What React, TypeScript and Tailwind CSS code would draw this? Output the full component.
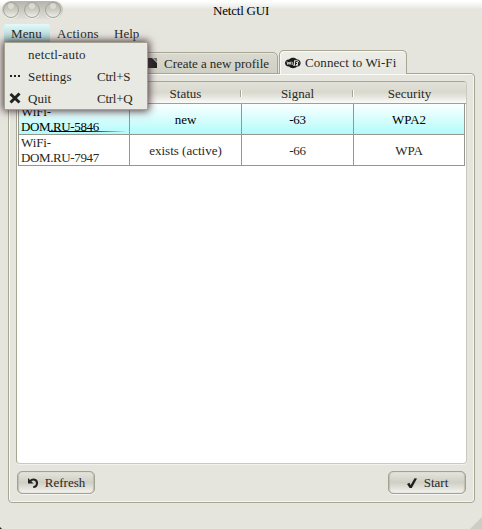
import React from 'react';

const networks = [
  { name: 'DOM.RU-5846', status: 'new', signal: '-63', security: 'WPA2', selected: true },
  { name: 'DOM.RU-7947', status: 'exists (active)', signal: '-66', security: 'WPA', selected: false },
];

function WindowButton() {
  return (
    <span className="h-4 w-4 rounded-full border border-[#a3a396] bg-gradient-to-b from-[#b9b9ae] via-[#cbcbc1] to-[#efefea] shadow-[0_1px_0_#f0f0ec]">
      <span className="mx-auto block h-1.5 w-1.5 rounded-full bg-[#e6e6df]/70" />
    </span>
  );
}

function TitleBar() {
  return (
    <header className="flex h-6 shrink-0 items-start bg-gradient-to-b from-white from-5% to-[#e5e5de] to-40%">
      <div className="mt-px ml-0.5 flex h-[18px] w-[61px] items-center gap-[5px] rounded-full bg-gradient-to-b from-[#b4b4ae] to-[#dfdfd8] pl-[1px]">
        <WindowButton />
        <WindowButton />
        <WindowButton />
      </div>
      <h1 className="ml-[150px] pt-[3px] text-[13px] leading-4 tracking-[-0.2px] text-black">Netctl GUI</h1>
    </header>
  );
}

function MenuBar() {
  return (
    <nav className="flex h-[19px] shrink-0 pl-1">
      <span className="w-[46px] rounded-t-[3px] bg-gradient-to-b from-[#e3fafa] to-[#9fcaca] pl-[7px] leading-5 tracking-[0.1px]">Menu</span>
      <span className="w-[57px] pl-[7px] leading-5 tracking-[0.2px]">Actions</span>
      <span className="pl-[7px] leading-5">Help</span>
    </nav>
  );
}

function WifiLogo() {
  return (
    <svg width="16" height="12" viewBox="0 0 16 12">
      <path d="M4 2.500C6 .2 10 .2 12 2.500h1c3.500 1 3.500 6 0 7h-1c-2 2.200-6 2.200-8 0H3c-4-1-4-6 0-7z" fill="#1b1b1b" />
      <path d="M9 3.300h3c3 0 3 5.400 0 5.400H8c1-1 1-4 1-5.400z" fill="#deded8" />
      <path d="M2 4.500l.8 3L4 5l1 2.500 1-3M7.200 5v3" fill="none" stroke="#e7e7e2" strokeWidth=".9" />
      <path d="M10.500 8.500v-4h2M10.500 6.500h1.500M13.500 5v3.500" fill="none" stroke="#252525" />
    </svg>
  );
}

function Tabs() {
  return (
    <div className="relative z-10 -mb-px flex h-6 shrink-0 items-end pl-2">
      <div className="flex h-[22px] w-[270px] items-center rounded-t-[5px] border border-[#a6a693] bg-gradient-to-b from-[#d9d9cf] to-[#cfcfc4] pl-[139px] shadow-[inset_0_1px_0_#e6e6df]">
        <svg width="10" height="10" viewBox="0 0 10 10" className="mr-[6px]">
          <path d="M0 0h4l5 5v5H0z" fill="#222" />
          <path d="M5 0h4v4z" fill="#777770" />
        </svg>
        <span className="whitespace-nowrap tracking-[-0.04px]">Create a new profile</span>
      </div>
      <div className="ml-px flex h-6 w-[128px] items-center rounded-t-[5px] border border-b-0 border-[#a6a693] bg-gradient-to-b from-[#ededE8] to-[#e7e7e1] pl-[5px] shadow-[inset_1px_1px_0_#fafaf7]">
        <WifiLogo />
        <span className="ml-1 whitespace-nowrap tracking-[0.07px]">Connect to Wi-Fi</span>
      </div>
    </div>
  );
}

function HeaderCell({ label }: { label: string }) {
  return (
    <div className="relative flex w-28 shrink-0 items-center justify-center pt-px pl-px">
      {label}
      {label !== 'Security' && (
        <span className="absolute top-[8px] -right-px h-[7px] w-0.5 border-l border-[#a6a693] bg-white" />
      )}
    </div>
  );
}

function NetworkTable() {
  return (
    <section className="h-[383px] w-[451px] shrink-0 overflow-hidden rounded-[4px] border border-t-[#a6a693] border-r-[#c9c9bd] border-b-[#c9c9bd] border-l-[#a6a693] bg-white shadow-[0_1px_0_#f1f1ed]">
      <div className="flex h-[22px] border-b border-[#a0a091] bg-gradient-to-b from-[#e1e1d9] via-[#d9d9cf] via-50% to-[#fafaf8]">
        <HeaderCell label="" />
        <HeaderCell label="Status" />
        <HeaderCell label="Signal" />
        <HeaderCell label="Security" />
      </div>
      {networks.map((n) => (
        <div
          key={n.name}
          className={
            n.selected
              ? 'ml-px flex h-[31px] w-[447px] border-b border-l border-[#969690] bg-gradient-to-b from-[#f9ffff] to-[#b2fbfb] text-black'
              : 'ml-px flex h-[31px] w-[447px] border-b border-l border-[#969690]'
          }
        >
          <div className="relative w-[111px] shrink-0 border-r border-[#969690] pl-[2px] leading-[15px]">
            <div className="tracking-[-0.1px]">WiFi-</div>
            <div className="tracking-[-0.38px]">{n.name}</div>
            {n.selected && (
              <span className="absolute bottom-[2px] left-[30px] h-px w-[78px] bg-gradient-to-r from-black from-45% to-transparent" />
            )}
          </div>
          <div className="flex w-28 shrink-0 items-center justify-center border-r border-[#969690]">{n.status}</div>
          <div className="flex w-28 shrink-0 items-center justify-center border-r border-[#969690] tracking-[-0.2px]">{n.signal}</div>
          <div className="flex grow items-center justify-center border-r border-[#969690]">{n.security}</div>
        </div>
      ))}
    </section>
  );
}

function PushButton({ children }: { children: React.ReactNode }) {
  return (
    <button className="flex h-[23px] w-[78px] items-center justify-center rounded-[5px] border border-[#a3a392] bg-gradient-to-b from-[#e5e5df] via-[#cfcfc5] via-50% to-[#f4f4f0] shadow-[inset_1px_0_1px_#bcbcb0,inset_-1px_0_1px_#bcbcb0,0_1px_0_#f5f5f1]">
      {children}
    </button>
  );
}

function MenuPopup() {
  return (
    <div className="absolute top-[42px] left-[4px] z-20 h-[68px] w-36 border border-[#a3a18f] bg-[#e8e9e3] shadow-[0_0_8px_1px_#483238]">
      <div className="flex h-[22px] items-center pl-[23px] tracking-[0.2px]">netctl-auto</div>
      <div className="flex h-[22px] items-center">
        <svg width="12" height="4" viewBox="0 0 12 4" className="mr-[7px] ml-1">
          <path d="M1 1h2v2H1zM5 1h2v2H5zM9 1h2v2H9z" fill="#222" />
        </svg>
        <span className="w-[69px] tracking-[0.25px]">Settings</span>
        <span className="tracking-[-0.25px]">Ctrl+S</span>
      </div>
      <div className="flex h-[22px] items-center">
        <svg width="12" height="12" viewBox="0 0 12 12" className="mr-[7px] ml-1">
          <path d="M1.500 2l9 8.500M10.500 1.500l-9 9" stroke="#202020" strokeWidth="2.900" />
        </svg>
        <span className="w-[69px]">Quit</span>
        <span className="tracking-[-0.25px]">Ctrl+Q</span>
      </div>
    </div>
  );
}

export default function App() {
  return (
    <main className="relative flex h-[529px] w-[482px] flex-col overflow-hidden bg-[#e5e5de] font-['Liberation_Serif',serif] text-[13px] leading-[15px] text-[#292925]">
      <TitleBar />
      <MenuBar />
      <div className="h-[7px] shrink-0" />
      <Tabs />
      <div className="ml-2 flex h-[430px] w-[467px] shrink-0 flex-col rounded-[4px] rounded-tl-none border border-[#a6a693] pt-[7px] pl-[7px] shadow-[inset_1px_1px_0_#fafaf7,inset_-1px_-1px_0_#f5f5f1]">
        <NetworkTable />
        <div className="mt-[7px] flex w-[450px] justify-between pl-px">
          <PushButton>
            <svg width="12" height="12" viewBox="0 0 12 12" className="mr-[6px]">
              <path d="M3 4.200C6 1.200 10 2.500 10 6c0 2.500-1.500 4-3.800 4" fill="none" stroke="#222" strokeWidth="2.100" />
              <path d="M1 1v5.500h5.500z" fill="#222" />
            </svg>
            Refresh
          </PushButton>
          <PushButton>
            <svg width="12" height="12" viewBox="0 0 12 12" className="mr-[6px]">
              <path d="M1 7l2.300-1.200L4.700 8 8.500 1.200 11 1.500 5.800 11H3.600z" fill="#202020" />
            </svg>
            Start
          </PushButton>
        </div>
      </div>
      <MenuPopup />
      <svg className="absolute right-0 bottom-0" width="12" height="12" viewBox="0 0 12 12">
        <path d="M12 0v12H0z" fill="#cdcdc3" />
      </svg>
      <svg className="absolute bottom-0 left-0" width="2" height="2">
        <path d="M0 0l2 2H0z" fill="#222" />
      </svg>
    </main>
  );
}
